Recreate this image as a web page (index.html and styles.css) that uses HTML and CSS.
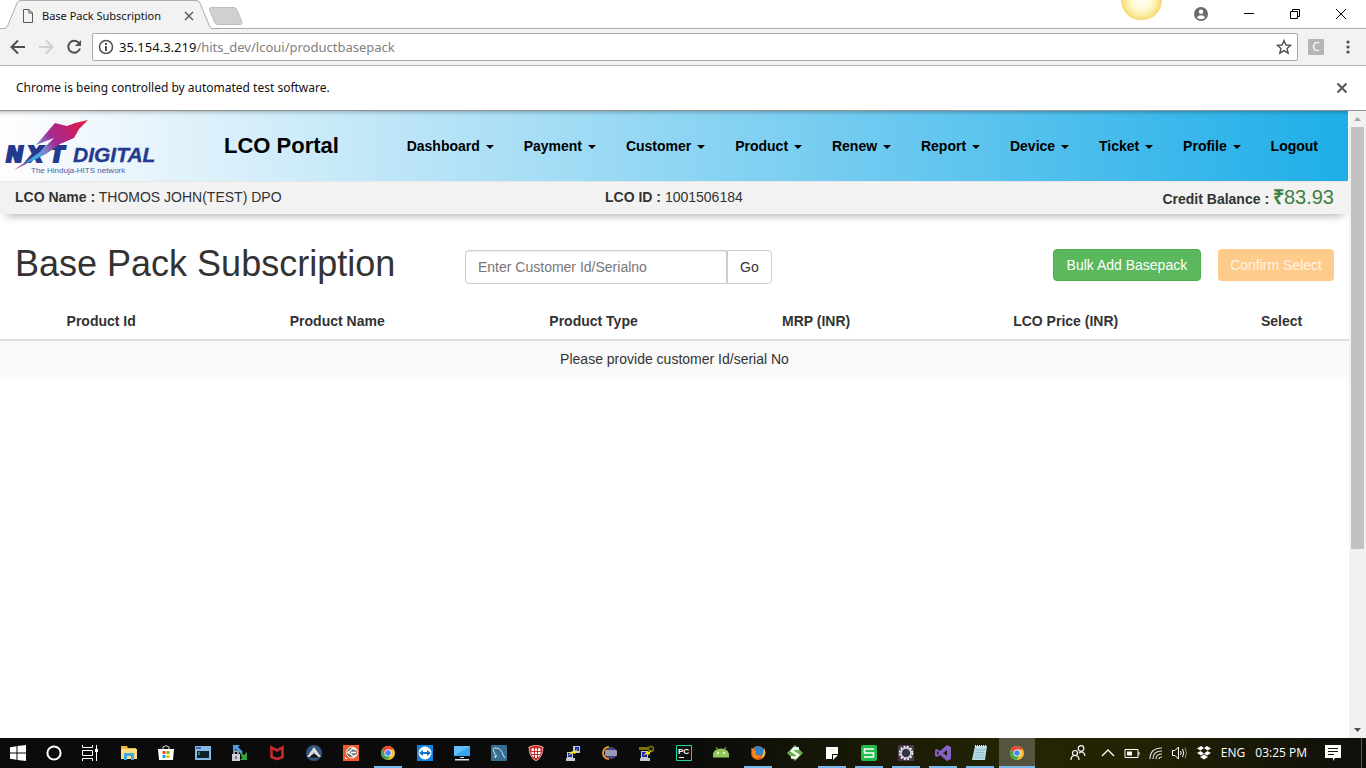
FILE: index.html
```html
<!DOCTYPE html>
<html lang="en">
<head>
<meta charset="utf-8">
<title>Base Pack Subscription</title>
<link rel="stylesheet" href="styles.css">
</head>
<body>
<div class="tabstrip">
  <div class="tab">
    <svg class="tab-shape" width="212" height="29" viewBox="0 0 212 29"><path d="M0 28.500H5Q7 28 8 25L17 3Q18 .5 21 .5H196Q199 .5 200 3L209 25Q210 28.500 212 28.500V29H0Z" fill="#f2f2f2"/><path d="M0 28.500H4Q7 28 8 25L17 3Q18 .5 21 .5H196Q199 .5 200 3L209 25Q210 28.500 212 28.500" fill="none" stroke="#acacac"/></svg>
    <svg class="tab-file" width="12" height="14" viewBox="0 0 12 14" fill="none" stroke="#5a5a5a"><path d="M1.500.5H7L10.500 4V13.500H1.500ZM7 .5V4H10.500"/></svg>
    <span class="tab-title">Base Pack Subscription</span>
    <button class="plain" aria-label="Close tab"><svg width="10" height="10" viewBox="0 0 10 10" stroke="#5a5a5a" stroke-width="1.500"><path d="M1 1 9 9M9 1 1 9"/></svg></button>
  </div>
  <button class="plain new-tab" aria-label="New tab"><svg width="36" height="18" viewBox="0 0 36 18"><path d="M3 .5H26Q28 .5 29 3L34 15Q34.500 17.500 32 17.500H10Q7.500 17.500 6.500 15L1.500 3Q1 .5 3 .5Z" fill="#d0d0d0" stroke="#bcbcbc"/></svg></button>
  <div class="window-tools">
    <button class="plain" aria-label="Profile"><svg width="14" height="14" viewBox="0 0 14 14"><circle cx="7" cy="7" r="7" fill="#6a6a6a"/><circle cx="7" cy="4.800" r="2.200" fill="#fff"/><path d="M2.800 10.500Q4 8.300 7 8.300T11.200 10.500Q9.800 12.200 7 12.200T2.800 10.500Z" fill="#fff"/></svg></button>
    <button class="plain" aria-label="Minimise"><svg width="10" height="10" viewBox="0 0 10 10" stroke="#000"><path d="M0 4.500H10"/></svg></button>
    <button class="plain" aria-label="Restore"><svg width="10" height="10" viewBox="0 0 10 10" fill="none" stroke="#000"><path d="M.5 2.500H7.500V9.500H.5ZM2.500 2.500V.5H9.500V7.500H7.500"/></svg></button>
    <button class="plain" aria-label="Close"><svg width="10" height="10" viewBox="0 0 10 10" stroke="#000"><path d="M0 0 10 10M10 0 0 10"/></svg></button>
  </div>
  <div class="sun"></div>
</div>

<div class="toolbar">
  <button class="plain" aria-label="Back"><svg width="16" height="16" viewBox="0 0 16 16" fill="none" stroke="#505050" stroke-width="2"><path d="M15 8H2M8 1.500 1.500 8 8 14.500"/></svg></button>
  <button class="plain" aria-label="Forward"><svg width="16" height="16" viewBox="0 0 16 16" fill="none" stroke="#d0d0d0" stroke-width="2"><path d="M1 8H14M8 1.500 14.500 8 8 14.500"/></svg></button>
  <button class="plain" aria-label="Reload"><svg width="16" height="16" viewBox="0 0 16 16"><path d="M13 4A6 6 0 1 0 14 9.500" fill="none" stroke="#505050" stroke-width="2"/><path d="M15 1V7H9Z" fill="#505050"/></svg></button>
  <div class="omnibox">
    <svg width="16" height="16" viewBox="0 0 16 16"><circle cx="8" cy="8" r="6.500" fill="none" stroke="#505050" stroke-width="1.500"/><path d="M7 7H9V12H7ZM7 4H9V6H7Z" fill="#505050"/></svg>
    <span class="url"><b>35.154.3.219</b>/hits_dev/lcoui/productbasepack</span>
    <button class="plain" aria-label="Bookmark"><svg width="16" height="16" viewBox="0 0 16 16"><path d="M8 1.500 9.900 6 14.700 6.300 11 9.400 12.200 14.200 8 11.600 3.800 14.200 5 9.400 1.300 6.300 6.100 6Z" fill="none" stroke="#505050" stroke-width="1.400"/></svg></button>
  </div>
  <button class="plain extension">C</button>
  <button class="plain" aria-label="Menu"><svg width="4" height="14" viewBox="0 0 4 14" fill="#505050"><circle cx="2" cy="2" r="1.600"/><circle cx="2" cy="7" r="1.600"/><circle cx="2" cy="12" r="1.600"/></svg></button>
</div>

<div class="notice">
  <span>Chrome is being controlled by automated test software.</span>
  <button class="plain" aria-label="Dismiss"><svg width="10" height="10" viewBox="0 0 10 10" stroke="#5a5a5a" stroke-width="2.200"><path d="M.5.5 9.500 9.500M9.500.5.5 9.500"/></svg></button>
</div>

<div class="viewport">
  <div class="page">
    <nav class="navbar">
      <svg class="logo" width="160" height="70" viewBox="0 0 160 70" role="img" aria-label="NXT Digital">
        <defs><linearGradient id="star" gradientUnits="userSpaceOnUse" x1="88" y1="9" x2="14" y2="59"><stop offset="0" stop-color="#f01c38"/><stop offset=".22" stop-color="#c2206c"/><stop offset=".45" stop-color="#a12b93"/><stop offset=".6" stop-color="#7d86c8"/><stop offset=".74" stop-color="#38b4e6"/><stop offset=".85" stop-color="#5a6fc0"/><stop offset=".93" stop-color="#b03a7c"/><stop offset="1" stop-color="#ed1c40"/></linearGradient></defs>
        <g fill="#233a8f" stroke="#233a8f" stroke-width="2" class="logo-nxt"><text x="6" y="51">N</text><text x="27" y="51">X</text><text x="50" y="51">T</text></g>
        <path d="M88 9 75 12 67 15 55 12 36 34 54 27 40 41 14 59 46 43 60 33 74 27 79 18Z" fill="url(#star)"/>
        <text class="logo-digital" x="73" y="51" fill="#233a8f" stroke="#233a8f" stroke-width=".3">DIGITAL</text>
        <text class="logo-sub" x="31" y="62" fill="#4a5fa8">The Hinduja-HITS network</text>
      </svg>
      <span class="brand">LCO Portal</span>
      <ul class="menu">
        <li><a href="#">Dashboard <i class="caret"></i></a></li>
        <li><a href="#">Payment <i class="caret"></i></a></li>
        <li><a href="#">Customer <i class="caret"></i></a></li>
        <li><a href="#">Product <i class="caret"></i></a></li>
        <li><a href="#">Renew <i class="caret"></i></a></li>
        <li><a href="#">Report <i class="caret"></i></a></li>
        <li><a href="#">Device <i class="caret"></i></a></li>
        <li><a href="#">Ticket <i class="caret"></i></a></li>
        <li><a href="#">Profile <i class="caret"></i></a></li>
        <li><a href="#">Logout</a></li>
      </ul>
    </nav>
    <div class="account">
      <span><b>LCO Name :</b> THOMOS JOHN(TEST) DPO</span>
      <span><b>LCO ID :</b> 1001506184</span>
      <span class="credit"><b>Credit Balance :</b> <span class="amount"><b>₹</b>83.93</span></span>
    </div>
    <div class="heading-row">
      <h1>Base Pack Subscription</h1>
      <form class="search">
        <input type="text" aria-label="Customer Id or serial number" placeholder="Enter Customer Id/Serialno">
        <button type="button">Go</button>
      </form>
      <div class="actions">
        <button class="btn btn-bulk">Bulk Add Basepack</button>
        <button class="btn btn-confirm" disabled>Confirm Select</button>
      </div>
    </div>
    <table class="products">
      <thead><tr><th class="c-id">Product Id</th><th class="c-name">Product Name</th><th class="c-type">Product Type</th><th class="c-mrp">MRP (INR)</th><th class="c-price">LCO Price (INR)</th><th>Select</th></tr></thead>
      <tbody><tr><td colspan="6">Please provide customer Id/serial No</td></tr></tbody>
    </table>
  </div>
  <div class="scrollbar">
    <svg width="17" height="16" viewBox="0 0 17 16"><path d="M5 10 8.500 6 12 10Z" fill="#a3a3a3"/></svg>
    <div class="track"><div class="thumb"></div></div>
    <svg width="17" height="16" viewBox="0 0 17 16"><path d="M5 6 8.500 10 12 6Z" fill="#505050"/></svg>
  </div>
</div>

<footer class="taskbar">
  <div class="system">
    <button class="plain task" aria-label="Start"><svg width="16" height="16" viewBox="0 0 16 16" fill="#fff"><path d="M0 2.200 6.500 1.300V7.500H0ZM7.500 1.100 16 0V7.500H7.500ZM0 8.500H6.500V14.700L0 13.800ZM7.500 8.500H16V16L7.500 14.900Z"/></svg></button>
    <button class="plain task" aria-label="Cortana"><svg width="16" height="16" viewBox="0 0 16 16"><circle cx="8" cy="8" r="6.600" fill="none" stroke="#fff" stroke-width="2"/></svg></button>
    <button class="plain task" aria-label="Task view"><svg width="16" height="16" viewBox="0 0 16 16" fill="none" stroke="#fff"><path d="M.5 0V2.500H10.500V0M.5 5.500H10.500V10.500H.5ZM.5 16V13.500H10.500V16M14.500 0V16"/><path d="M13 4H16V7H13Z" fill="#fff" stroke="none"/></svg></button>
  </div>
  <div class="apps">
    <button class="plain task" aria-label="File Explorer"><svg width="16" height="16" viewBox="0 0 16 16"><path d="M0 1H6L7 3H15V6H0Z" fill="#f0b93a"/><path d="M0 4H16V14H0Z" fill="#ffe08a"/><path d="M3 15V8H13V15H10V11H6V15Z" fill="#3fa9e0"/></svg></button>
    <button class="plain task" aria-label="Store"><svg width="16" height="16" viewBox="0 0 16 16"><path d="M5 4V2Q8-.5 11 2V4" fill="none" stroke="#ddd"/><path d="M0 4H16L15 15H1Z" fill="#fff"/><path d="M4.500 6H7.500V9H4.500Z" fill="#f25022"/><path d="M8.500 6H11.500V9H8.500Z" fill="#7fba00"/><path d="M4.500 10H7.500V13H4.500Z" fill="#00a4ef"/><path d="M8.500 10H11.500V13H8.500Z" fill="#ffb900"/></svg></button>
    <button class="plain task" aria-label="Terminal"><svg width="16" height="16" viewBox="0 0 16 16"><path d="M0 1H16V15H0Z" fill="#86b9e6"/><path d="M1 2H6V4H1Z" fill="#3b6ea8"/><path d="M2 6H14V13H2Z" fill="#10202c"/><path d="M3 7 5 8.500 3 10" fill="none" stroke="#59c26a"/></svg></button>
    <button class="plain task" aria-label="WinSCP"><svg width="16" height="16" viewBox="0 0 16 16"><path d="M1 0H8L6 2 11 7 9 9 4 4 1 7Z" fill="#4d9de0"/><path d="M8 7 12 10 15 7V15H8L10 13Z" fill="#37a53a"/><path d="M0 9H8V16H0Z" fill="#ccd1d7"/><path d="M2 9V7Q4 5 6 7V9" fill="none" stroke="#bbb" stroke-width="1.500"/><path d="M3.500 11H4.500V14H3.500Z" fill="#333"/></svg></button>
    <button class="plain task" aria-label="McAfee"><svg width="16" height="16" viewBox="0 0 16 16"><path d="M2.500 2.500 8 5.500 13.500 2.500V12L8 14 2.500 12Z" fill="none" stroke="#c7282f" stroke-width="2.600"/></svg></button>
    <button class="plain task" aria-label="Autodesk"><svg width="16" height="16" viewBox="0 0 16 16"><circle cx="8" cy="8" r="8" fill="#35567c"/><path d="M1 12 8 2 15 12H11L8 7 4.500 12Z" fill="#ddd"/><path d="M3 12.500H13L8 8Z" fill="#111"/><path d="M5.500 10 8 7.500 10.500 10" fill="none" stroke="#ddd"/></svg></button>
    <button class="plain task" aria-label="Recorder"><svg width="16" height="16" viewBox="0 0 16 16"><path d="M0 0H16V16H0Z" fill="#f15a29"/><circle cx="9" cy="7.500" r="5.500" fill="#777" stroke="#fff"/><path d="M13 5Q10 2 8 5L5 7.500 8 9Q10 13 13 10M8 7.500H13" fill="none" stroke="#fff" stroke-width="1.300"/><path d="M2 12 5 14H2Z" fill="#fff"/></svg></button>
    <button class="plain task open" aria-label="Chrome"><svg width="16" height="16" viewBox="0 0 16 16"><circle cx="8" cy="8" r="7" fill="#fbc02d"/><path d="M2 4.500A7 7 0 0 1 14 4.500H8L5 10Z" fill="#e24b3b"/><path d="M2 4.500A7 7 0 0 0 7.500 15L11 9.500 5 9.500Z" fill="#3fa652"/><circle cx="8" cy="8" r="3.600" fill="#fff"/><circle cx="8" cy="8" r="2.800" fill="#4285f4"/></svg></button>
    <button class="plain task" aria-label="TeamViewer"><svg width="16" height="16" viewBox="0 0 16 16"><path d="M0 0H16V16H0Z" fill="#1282e0"/><circle cx="8" cy="8" r="6.500" fill="#fff"/><path d="M2 8 6 5V7H10V5L14 8 10 11V9H6V11Z" fill="#1272c8"/></svg></button>
    <button class="plain task" aria-label="This PC"><svg width="16" height="16" viewBox="0 0 16 16"><path d="M0 1H16V11H0Z" fill="#61c0fa"/><path d="M0 11 16 1V11Z" fill="#35a5f0"/><path d="M6 12H10V13H6ZM1 14H15V15.500H1Z" fill="#d7e4ee"/></svg></button>
    <button class="plain task" aria-label="MySQL"><svg width="16" height="16" viewBox="0 0 16 16"><rect width="16" height="16" rx="1" fill="#356f93"/><path d="M4 13Q5 10 3 7 1 2 5 3 11 4 12 10L14 13M4 13 6 10" fill="none" stroke="#d8e7ef"/></svg></button>
    <button class="plain task" aria-label="Security"><svg width="16" height="16" viewBox="0 0 16 16"><path d="M1 2 8 0 15 2Q15 12 8 16Q1 12 1 2Z" fill="#c8322f" stroke="#e9a09d"/><path d="M3.500 3.500H12.500V10Q10 13 8 13T3.500 10Z" fill="#fff"/><path d="M6.500 3V13M9.500 3V13M3 6.500H13M3 9.500H13" stroke="#c8322f"/></svg></button>
    <button class="plain task" aria-label="PuTTY"><svg width="16" height="16" viewBox="0 0 16 16"><path d="M8 1H15V8H8ZM2 7H8V13H2ZM1 13H10V16H1Z" fill="#c5c8d0"/><path d="M10 2H14V6H10ZM3 8H7V12H3Z" fill="#1725c6"/><path d="M3 11 7 6 9 7 13 3 10 9 8 8Z" fill="#ffed00"/></svg></button>
    <button class="plain task" aria-label="Eclipse"><svg width="16" height="16" viewBox="0 0 16 16"><path d="M7 2A6 6 0 0 0 7 14" fill="none" stroke="#e79429" stroke-width="2"/><circle cx="9" cy="8" r="6" fill="#46427f"/><path d="M3 6H15M3 8H15M3 10H15" stroke="#eee"/></svg></button>
    <button class="plain task" aria-label="PuTTYgen"><svg width="16" height="16" viewBox="0 0 16 16"><path d="M2 6H9V13H2ZM1 13H11V16H1Z" fill="#c5c8d0"/><path d="M3 7H8V12H3Z" fill="#1725c6"/><path d="M0 2H10V5H0Z" fill="#777300"/><circle cx="12" cy="4" r="2.500" fill="none" stroke="#777300" stroke-width="1.500"/><path d="M4 11 8 6 10 7 13 4 10 10 8 9Z" fill="#f5e400"/></svg></button>
    <button class="plain task" aria-label="PyCharm"><svg width="16" height="16" viewBox="0 0 16 16"><path d="M.5.5H15.500V15.500H.5Z" fill="#101010" stroke="#20d890"/><text class="icon-text" x="2" y="9" fill="#fff">PC</text><path d="M3 12H8V13H3Z" fill="#fff"/></svg></button>
    <button class="plain task" aria-label="Android"><svg width="16" height="16" viewBox="0 0 16 16"><path d="M0 12Q0 4 8 4T16 12ZM3 2 5 5M13 2 11 5" fill="#94c65a" stroke="#94c65a"/><circle cx="5" cy="8" r="1" fill="#fff"/><circle cx="11" cy="8" r="1" fill="#fff"/></svg></button>
    <button class="plain task open" aria-label="Firefox"><svg width="16" height="16" viewBox="0 0 16 16"><circle cx="8" cy="8" r="7" fill="#e66000"/><path d="M4 3Q9-1 14 4Q15 9 11 11L7 10 5 6Z" fill="#2f83c6"/><path d="M1 3Q4 4 6 6L5 9Q8 12 12 10Q9 15 3 12Z" fill="#f28a20"/><path d="M14 3Q18 10 11 14L13 9Z" fill="#ffb52b"/></svg></button>
    <button class="plain task" aria-label="Source tool"><svg width="16" height="16" viewBox="0 0 16 16"><path d="M8 0 16 8 8 16 0 8Z" fill="#69b34c"/><path d="M12 3.500H7L5 6 11 10 9 12.500H4" fill="none" stroke="#fff" stroke-width="2.500"/></svg></button>
    <button class="plain task open" aria-label="Sticky Notes"><svg width="14" height="14" viewBox="0 0 14 14"><path d="M1 1H13V8H7V13H1Z" fill="#fff"/><path d="M8 9H13L8 14Z" fill="#fff"/></svg></button>
    <button class="plain task open" aria-label="Spreadsheet"><svg width="16" height="16" viewBox="0 0 16 16"><rect width="16" height="16" rx="2" fill="#20bd4b"/><path d="M13 4H3.500V8H12.500V12H3" fill="none" stroke="#fff" stroke-width="1.600"/></svg></button>
    <button class="plain task open" aria-label="Settings"><svg width="16" height="16" viewBox="0 0 16 16"><path d="M0 0H16V16H0Z" fill="#493653"/><circle cx="8" cy="8" r="6.300" fill="none" stroke="#eee" stroke-width="2" stroke-dasharray="2 1.300"/><circle cx="8" cy="8" r="5" fill="#35334a" stroke="#ddd" stroke-width="1.500"/></svg></button>
    <button class="plain task open" aria-label="Visual Studio"><svg width="16" height="16" viewBox="0 0 16 16"><path d="M12 0 16 2V14L12 16 5 10 2 12 0 11V5L2 4 5 6ZM12 5 8 8 12 11ZM2 6V10L4 8Z" fill="#8661c5" fill-rule="evenodd"/></svg></button>
    <button class="plain task open" aria-label="Notepad"><svg width="16" height="16" viewBox="0 0 16 16"><path d="M3 1H15L13 15H0Z" fill="#b9dbe6"/><path d="M4 5H13M3.500 7.500H12.500M3 10H12M3 12.500H12" stroke="#8fbccb"/><path d="M3 1H15" stroke="#eee" stroke-width="2" stroke-dasharray="1 1"/></svg></button>
    <button class="plain task open active" aria-label="Chrome window"><svg width="16" height="16" viewBox="0 0 16 16"><circle cx="8" cy="8" r="7" fill="#fbc02d"/><path d="M2 4.500A7 7 0 0 1 14 4.500H8L5 10Z" fill="#e24b3b"/><path d="M2 4.500A7 7 0 0 0 7.500 15L11 9.500 5 9.500Z" fill="#3fa652"/><circle cx="8" cy="8" r="3.600" fill="#fff"/><circle cx="8" cy="8" r="2.800" fill="#4285f4"/></svg></button>
  </div>
  <div class="tray">
    <svg class="people" width="16" height="16" viewBox="0 0 16 16" fill="none" stroke="#fff" stroke-width="1.200"><circle cx="11" cy="3.500" r="2.800"/><circle cx="5" cy="8" r="2.500"/><path d="M1 15Q1 10.500 5 10.500T9 15M9 8Q14 5 15 11"/></svg>
    <svg width="14" height="16" viewBox="0 0 14 16" fill="none" stroke="#fff" stroke-width="1.300"><path d="M1 11 7 5 13 11"/></svg>
    <svg width="16" height="16" viewBox="0 0 16 16"><path d="M1 4.500H14V12.500H1ZM15 7V10" fill="none" stroke="#fff"/><path d="M3 6.500H8V10.500H3Z" fill="#fff"/></svg>
    <svg width="14" height="16" viewBox="0 0 14 16" fill="none" stroke="#ddd" stroke-width="1.200"><path d="M1 14Q1 3 13 3M4 14Q4 6 13 6M7 14Q7 9 13 9M10 14Q10 12 13 12"/></svg>
    <svg width="16" height="16" viewBox="0 0 16 16" fill="none" stroke="#fff"><path d="M.5 5.500H3L6.500 2V14L3 10.500H.5ZM8.500 6Q10 8 8.500 10M10.500 4Q13 8 10.500 12"/><path d="M13 2.500Q16 8 13 13.500" stroke="#888"/></svg>
    <svg width="14" height="14" viewBox="0 0 14 14" fill="#fff"><path d="M4 0 7 2 3.500 4.500 0 2.500ZM10 0 14 2.500 10.500 4.500 7 2ZM3.500 5 7 7.500 4 9.500 0 7ZM10.500 5 14 7 10 9.500 7 7.500ZM7 8.500 11 11 7 13.500 3 11Z"/></svg>
    <span class="lang">ENG</span>
    <span class="clock">03:25 PM</span>
    <svg class="center" width="16" height="16" viewBox="0 0 16 16"><path d="M0 0H16V13H10L8 16V13H0Z" fill="#fff"/><path d="M3 3.500H13M3 6.500H13M3 9.500H9" stroke="#15150a"/></svg>
  </div>
</footer>
</body>
</html>
```

FILE: styles.css
```css
* { box-sizing: border-box; }

body {
  margin: 0;
  min-height: 100vh;
  display: flex;
  flex-direction: column;
  background: #fff;
  color: #333;
  font: 14px/20px "Liberation Sans", Arial, sans-serif;
}

svg { display: block; flex: none; }

.plain {
  display: flex;
  align-items: center;
  justify-content: center;
  padding: 0;
  border: 0;
  background: none;
  font: inherit;
}

/* Browser frame */
.tabstrip,
.toolbar,
.notice { font-family: "Noto Sans", "Open Sans", sans-serif; font-size: 12px; }

.tabstrip {
  position: relative;
  display: flex;
  align-items: center;
  height: 29px;
  border-bottom: 1px solid #acacac;
}

.tab {
  position: relative;
  display: flex;
  align-items: center;
  width: 212px;
  height: 29px;
  padding: 2px 18px 0 22px;
  margin-bottom: -1px;
  color: #111;
}

.tab-shape { position: absolute; left: 0; top: 0; }
.tab-file, .tab-title, .tab button { position: relative; }
.tab-title { flex: 1; margin-left: 8px; font-size: 11px; white-space: nowrap; }
.new-tab { margin: 3px 0 0 -4px; }

.window-tools {
  display: flex;
  align-items: center;
  gap: 36px;
  margin-left: auto;
  padding-right: 20px;
}

.sun {
  position: absolute;
  right: 204px;
  top: 0;
  width: 41px;
  height: 20px;
  border-radius: 0 0 20px 20px;
  background: radial-gradient(circle at 50% 0, #fff 0, #fffbd0 10px, #fbe796 17px, #f8d66e 20px);
}

.toolbar {
  display: flex;
  align-items: center;
  gap: 12px;
  height: 37px;
  padding: 0 16px 0 10px;
  border-bottom: 1px solid #b5b5b5;
  background: #f2f2f2;
}

.omnibox {
  flex: 1;
  display: flex;
  align-items: center;
  height: 28px;
  padding: 0 5px;
  margin-left: -2px;
  border: 1px solid #a9a9a9;
  border-radius: 2px;
  background: #fff;
}

.url { flex: 1; margin-left: 5px; color: #808080; font-size: 13px; }
.url b { color: #111; font-weight: 400; }

.extension {
  width: 16px;
  height: 16px;
  margin: 0 10px 0 -2px;
  border-radius: 1px;
  background: #b5b5b5;
  color: #fff;
  font-size: 12px;
}

.notice {
  display: flex;
  align-items: center;
  justify-content: space-between;
  height: 45px;
  padding: 0 19px 0 16px;
  border-bottom: 1px solid #929292;
  color: #111;
}

/* Portal page */
.viewport { flex: 1; display: flex; }
.page { flex: 1; min-width: 0; }

.navbar {
  display: flex;
  align-items: center;
  height: 71px;
  margin-right: 1px;
  border-bottom: 1px solid #e7e7e7;
  background: linear-gradient(to right, #fffdfe, #1faee8);
  box-shadow: inset 0 4px 4px -3px rgba(0, 0, 0, .3);
}

.logo-nxt { font: italic 700 21px "DejaVu Sans", sans-serif; }
.logo-digital { font: italic 700 21px "Liberation Sans", sans-serif; }
.logo-sub { font: 8px "Liberation Sans", sans-serif; }

.brand {
  margin: 0 0 1px 64px;
  color: #000;
  font-size: 22px;
  font-weight: 700;
  white-space: nowrap;
}

.menu {
  display: flex;
  margin: 0 15px 0 auto;
  padding: 0;
  list-style: none;
}

.menu a {
  display: block;
  padding: 15px;
  color: #000;
  font-weight: 700;
  text-decoration: none;
  white-space: nowrap;
}

.caret {
  display: inline-block;
  margin-left: 2px;
  border: 4px solid transparent;
  border-top-color: #000;
  border-bottom: 0;
  vertical-align: middle;
}

.account {
  display: grid;
  grid-template-columns: 590px 1fr auto;
  height: 32px;
  padding: 5px 15px;
  background: #f2f2f2;
  box-shadow: 0 8px 8px -6px rgba(0, 0, 0, .3);
}

.amount { color: #3c8040; font-size: 20px; }

.heading-row {
  display: flex;
  align-items: flex-start;
  padding: 35px 15px 0;
}

h1 {
  width: 450px;
  margin: 0;
  font-size: 36px;
  font-weight: 500;
  line-height: 30px;
  white-space: nowrap;
}

.search { display: flex; margin-top: 1px; }

.search input,
.search button {
  height: 34px;
  padding: 0 12px;
  border: 1px solid #ccc;
  background: #fff;
  color: #333;
  font: inherit;
}

.search input {
  width: 262px;
  border-radius: 4px 0 0 4px;
  box-shadow: inset 0 1px 1px rgba(0, 0, 0, .08);
}

.search input::placeholder { color: #777; opacity: 1; }
.search button { border-radius: 0 4px 4px 0; }

.actions { display: flex; gap: 17px; margin-left: auto; }

.btn {
  height: 32px;
  padding: 0 12px;
  border: 1px solid #4cae4c;
  border-radius: 4px;
  background: #5cb85c;
  color: #fff;
  font: inherit;
}

.btn-bulk { padding: 0 13px; }
.btn-confirm { border: 0; background: #ffcb8a; color: #fff5e8; }

.products {
  width: 100%;
  margin-top: 19px;
  border-collapse: collapse;
  table-layout: fixed;
  text-align: center;
}

.products th { padding: 8px; border-bottom: 2px solid #ddd; }
.products td { padding: 8px; background: #f9f9f9; }
.c-id { width: 15%; }
.c-name { width: 20%; }
.c-type { width: 18%; }
.c-mrp { width: 15%; }
.c-price { width: 22%; }

.scrollbar {
  display: flex;
  flex-direction: column;
  width: 17px;
  background: #f1f1f1;
}

.track { flex: 1; padding: 0 2px; }
.thumb { height: 71%; background: #c1c1c1; }

/* Desktop taskbar */
.taskbar {
  display: flex;
  height: 30px;
  background: linear-gradient(to right, #0b0b0b 0 50%, #252504 75%, #242404 82%, #0e0e0b);
  color: #fff;
  font-family: "Open Sans", "Noto Sans", sans-serif;
  font-size: 12px;
}

.system { display: flex; margin-right: 3px; }
.apps { display: flex; gap: 1px; }
.task { position: relative; width: 36px; height: 30px; }

.open::after {
  content: "";
  position: absolute;
  right: 4px;
  bottom: 0;
  left: 4px;
  height: 2px;
  background: #76b9ed;
}

.active { background: #55553f; }
.active::after { right: 0; left: 0; }
.icon-text { font: 700 8px "Liberation Sans", sans-serif; }

.tray {
  display: flex;
  align-items: center;
  gap: 9px;
  margin-left: auto;
  margin-right: 4px;
  padding-right: 20px;
  border-right: 1px solid #555;
}

.people { margin-right: 6px; }
.lang { margin-left: 1px; }
.clock { margin: 0 9px 0 1px; white-space: nowrap; }
```
